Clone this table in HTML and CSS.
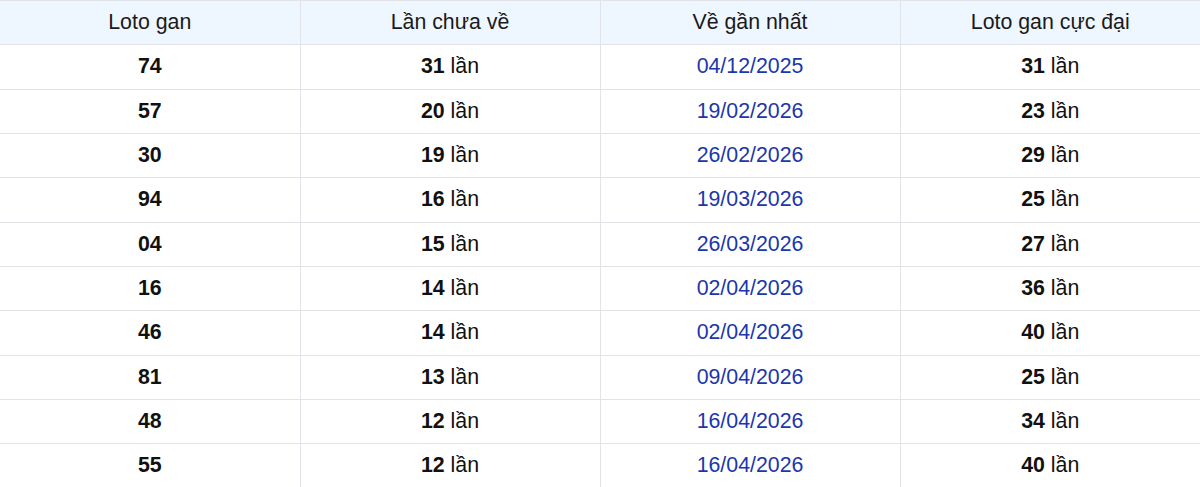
FILE: index.html
```html
<!DOCTYPE html>
<html lang="vi">
<head>
<meta charset="utf-8">
<title>Loto gan</title>
<link rel="stylesheet" href="styles.css">
</head>
<body>
<table class="gan-table">
  <thead>
    <tr>
      <th>Loto gan</th>
      <th>Lần chưa về</th>
      <th>Về gần nhất</th>
      <th>Loto gan cực đại</th>
    </tr>
  </thead>
  <tbody>
    <tr><td><b>74</b></td><td><b>31</b> lần</td><td class="date">04/12/2025</td><td><b>31</b> lần</td></tr>
    <tr><td><b>57</b></td><td><b>20</b> lần</td><td class="date">19/02/2026</td><td><b>23</b> lần</td></tr>
    <tr><td><b>30</b></td><td><b>19</b> lần</td><td class="date">26/02/2026</td><td><b>29</b> lần</td></tr>
    <tr><td><b>94</b></td><td><b>16</b> lần</td><td class="date">19/03/2026</td><td><b>25</b> lần</td></tr>
    <tr><td><b>04</b></td><td><b>15</b> lần</td><td class="date">26/03/2026</td><td><b>27</b> lần</td></tr>
    <tr><td><b>16</b></td><td><b>14</b> lần</td><td class="date">02/04/2026</td><td><b>36</b> lần</td></tr>
    <tr><td><b>46</b></td><td><b>14</b> lần</td><td class="date">02/04/2026</td><td><b>40</b> lần</td></tr>
    <tr><td><b>81</b></td><td><b>13</b> lần</td><td class="date">09/04/2026</td><td><b>25</b> lần</td></tr>
    <tr><td><b>48</b></td><td><b>12</b> lần</td><td class="date">16/04/2026</td><td><b>34</b> lần</td></tr>
    <tr><td><b>55</b></td><td><b>12</b> lần</td><td class="date">16/04/2026</td><td><b>40</b> lần</td></tr>
  </tbody>
</table>
</body>
</html>
```
FILE: styles.css
```css
html, body {
  margin: 0;
  padding: 0;
  background: #ffffff;
}
body {
  font-family: "Liberation Sans", Arial, sans-serif;
  font-size: 21.33px;
  color: #111111;
  overflow: hidden;
}
.gan-table {
  width: 100%;
  border-collapse: collapse;
  table-layout: fixed;
}
.gan-table tr {
  height: 44.33px;
}
.gan-table th,
.gan-table td {
  padding: 0;
  text-align: center;
  vertical-align: middle;
  border: 1.5px solid #e1e3e8;
  line-height: 1;
}
.gan-table th:first-child,
.gan-table td:first-child {
  border-left: none;
}
.gan-table th:last-child,
.gan-table td:last-child {
  border-right: none;
}
.gan-table th {
  background: #eef6ff;
  font-weight: normal;
  color: #1a1a1a;
}
.gan-table td b {
  font-weight: bold;
  color: #111111;
}
.gan-table td.date {
  color: #1a37ad;
}
```
